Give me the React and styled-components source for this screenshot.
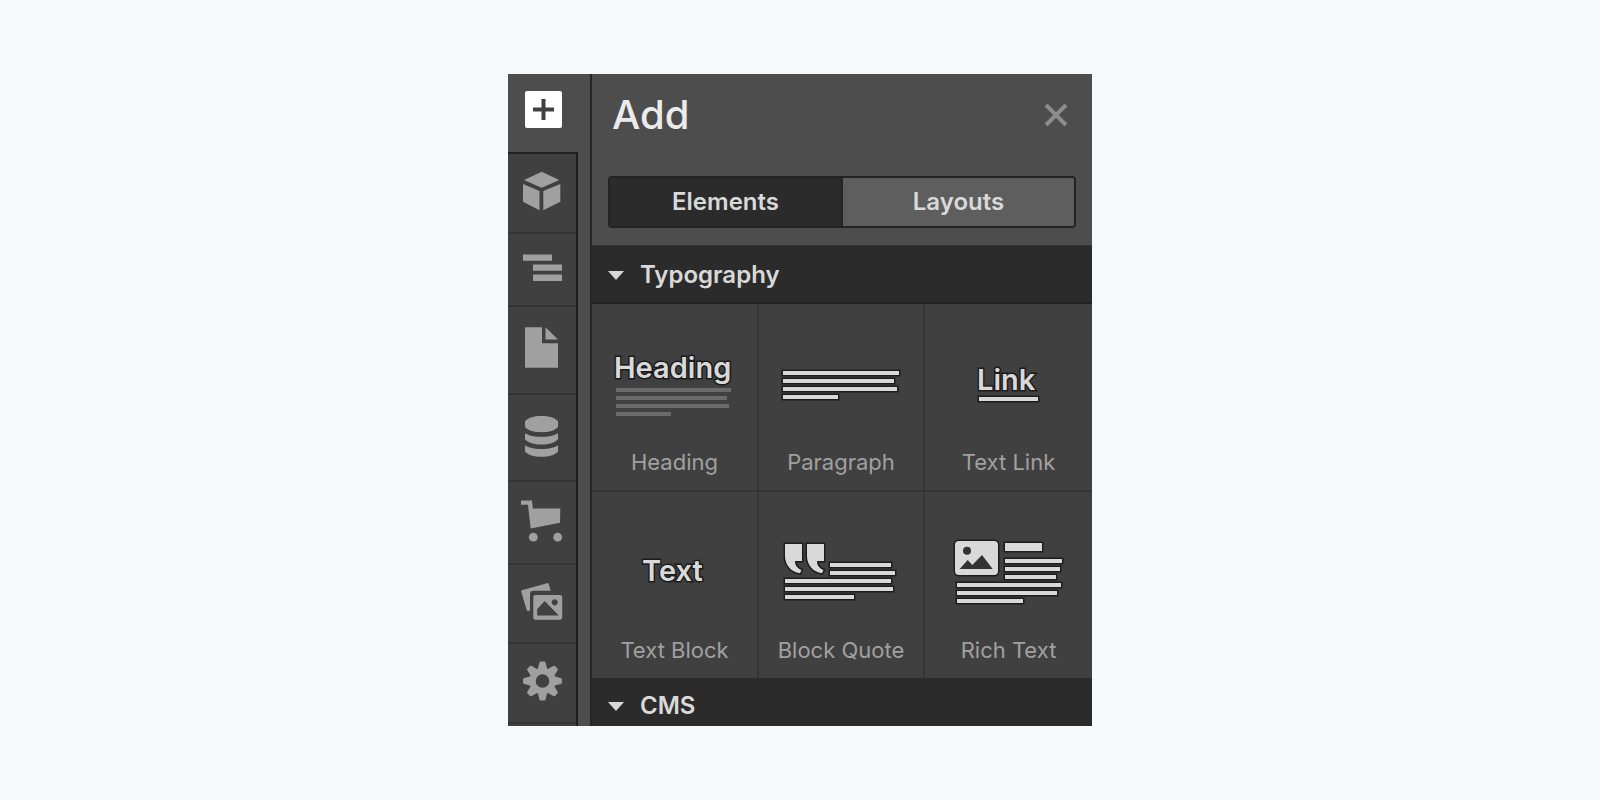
import React, { useState } from 'react';
import styled, { createGlobalStyle } from 'styled-components';

const GlobalStyle = createGlobalStyle`
  * {
    box-sizing: border-box;
  }

  body {
    margin: 0;
    background: #f6f8fa;
    font-family: Inter, 'Liberation Sans', sans-serif;
  }

  button {
    margin: 0;
    padding: 0;
    border: none;
    background: none;
    font: inherit;
    color: inherit;
    cursor: pointer;
  }

  svg {
    display: block;
  }
`;

const Page = styled.main`
  min-height: 100vh;
  padding: 74px 24px;
  display: flex;
  justify-content: center;
  align-items: flex-start;
`;

const Designer = styled.div`
  width: 100%;
  max-width: 584px;
  max-height: calc(100vh - 148px);
  overflow: hidden;
  display: flex;
  background: #4d4d4d;
  color: #d9d9d9;
`;

/* left toolbar */

const Rail = styled.nav`
  flex: 0 0 82px;
  display: flex;
  flex-direction: column;
  align-items: flex-start;
`;

const AddBtn = styled.button`
  margin: 17px 0 24px 17px;
  width: 37px;
  height: 37px;
  border-radius: 2px;
  background: #fff;
  color: #404040;
`;

const RailList = styled.div`
  flex: 1 0 auto;
  width: 70px;
  border-top: 2px solid #222;
  border-right: 2px solid #1e1e1e;
  background: #404040;
`;

const RailBtn = styled.button`
  width: 100%;
  height: ${(props) => props.$height}px;
  padding-bottom: 4px;
  border-bottom: 2px solid #343434;
  display: flex;
  align-items: center;
  justify-content: center;
  color: #a0a0a0;

  &:hover {
    color: #d9d9d9;
  }
`;

/* add panel */

const Panel = styled.section`
  flex: 1;
  min-width: 0;
  border-left: 2px solid #262626;
`;

const PanelHeader = styled.header`
  padding: 16px 20px 0;
  display: flex;
  align-items: center;
  justify-content: space-between;
`;

const Title = styled.h1`
  margin: 0;
  font-size: 40px;
  line-height: 50px;
  font-weight: 500;
  color: #ebebeb;
`;

const CloseBtn = styled.button`
  width: 32px;
  height: 32px;
  display: flex;
  align-items: center;
  justify-content: center;
  color: #8c8c8c;
`;

const Tabs = styled.div`
  margin: 36px 16px 17px;
  display: flex;
  border: 2px solid #242424;
  border-radius: 4px;
  overflow: hidden;
`;

const Tab = styled.button`
  flex: 1;
  height: 48px;
  padding-bottom: 2px;
  font-size: 24px;
  font-weight: 600;
  background: ${(props) => (props.$active ? '#2b2b2b' : '#5e5e5e')};

  & + & {
    border-left: 2px solid #242424;
  }
`;

const SectionBtn = styled.button`
  width: 100%;
  height: ${(props) => (props.$open ? 59 : 56)}px;
  padding: 2px 16px 0;
  border-top: ${(props) => (props.$open ? '1px solid #353535' : 'none')};
  border-bottom: 2px solid #222;
  display: flex;
  align-items: center;
  gap: 16px;
  background: #2b2b2b;
  font-size: 24px;
  line-height: 28px;
  font-weight: 600;
`;

const Grid = styled.div`
  display: grid;
  grid-template-columns: 167px 166px 1fr;
  grid-template-rows: 188px 186px;
  background: #404040;
`;

const Item = styled.button`
  padding: 36px 0 0;
  border-right: 2px solid #353535;
  border-bottom: 2px solid #353535;
  display: flex;
  flex-direction: column;
  align-items: center;

  &:nth-child(3n) {
    border-right: none;
  }

  &:nth-child(n + 4) {
    border-bottom: none;
  }
`;

const Thumb = styled.svg`
  align-self: flex-start;
  margin-left: 20px;
  overflow: visible;
  fill: #d9d9d9;
  stroke: #1c1c1c;
  stroke-width: 3px;
  paint-order: stroke;
  font-size: 29px;
  font-weight: 600;
`;

const ItemLabel = styled.span`
  margin-top: 28px;
  font-size: 22px;
  line-height: 28px;
  color: #a0a0a0;
`;

const Icon = ({ children }) => (
  <svg width="42" height="42" viewBox="0 0 42 42" fill="currentColor" aria-hidden="true">
    {children}
  </svg>
);

const Lines = ({ x, rows }) => rows.map(([y, width]) => (
  <rect key={y} x={x} y={y} width={width} height="4" />
));

const railItems = [
  {
    label: 'Symbols',
    height: 80,
    icon: (
      <>
        <path d="M20.7 1.7 38.3 10 20.7 17.7 3 10z" />
        <path d="M2 14l16.5 7v19.3L2 31.7z" />
        <path d="M39.3 14l-17 7v19.3l17-8.6z" />
      </>
    ),
  },
  {
    label: 'Navigator',
    height: 73,
    icon: <path d="M2 7.4h29v6.4H2zM12 17.4h29v6.4H12zM12 27.6h29V34H12z" />,
  },
  {
    label: 'Pages',
    height: 88,
    icon: (
      <>
        <path d="M4 .3h17v16h16v24.4H4z" />
        <path d="M24.5.3 37 12.6H24.5z" />
      </>
    ),
  },
  {
    label: 'CMS',
    height: 87,
    icon: (
      <>
        <path d="M4 6.2C7 2.700 13 1 20.500 1S34 2.700 37 6.200v5.800c-3 3.500-9 5.200-16.500 5.200S7 15.500 4 12z" />
        <path d="M4 18.200C8 20.700 13 21.800 20.500 21.800S33 20.700 37 18.200v6C34 27.500 28 29.500 20.500 29.500S7 27.500 4 24.200z" />
        <path d="M4 30.200C8 32.700 13 33.900 20.500 33.900S33 32.700 37 30.200v6.200C34 39.700 28 41.700 20.500 41.700S7 39.700 4 36.400z" />
      </>
    ),
  },
  {
    label: 'Ecommerce',
    height: 83,
    icon: (
      <>
        <path d="M0 .4h11l.8 8.200h27.500l-.3 14.200L9.700 28.400 7 4.800H0z" />
        <circle cx="12.300" cy="37.200" r="4.400" />
        <circle cx="36.700" cy="37.200" r="4.400" />
      </>
    ),
  },
  {
    label: 'Assets',
    height: 79,
    icon: (
      <>
        <path d="M1.500 9 26 2.200q1.500-.4 1.900 1l1.700 6.500H12.500Q9 9.700 9 13v16.500l-1.500.5q-1.500.3-1.900-1.200L.3 11q-.4-1.500 1.200-2z" />
        <path
          fillRule="evenodd"
          d="M14.500 14H39q2.200 0 2.200 2.200v20.300q0 2.200-2.200 2.200H14.500q-2.200 0-2.200-2.200V16.200q0-2.200 2.200-2.200zM16.200 28v6.400h21.500L23.700 20zM33.700 18.200a3.100 3.100 0 1 0 .01 0z"
        />
      </>
    ),
  },
  {
    label: 'Settings',
    height: 80,
    icon: (
      <>
        <circle cx="21.500" cy="21" r="10" fill="none" stroke="currentColor" strokeWidth="6.400" />
        {[0, 45, 90, 135, 180, 225, 270, 315].map((angle) => (
          <path
            key={angle}
            d="M16.700 9.500l1.700-6.700q.3-1.200 1.300-1.200h3.600q1 0 1.300 1.200l1.700 6.700z"
            transform={`rotate(${angle} 21.500 21)`}
          />
        ))}
      </>
    ),
  },
];

const typography = [
  {
    label: 'Heading',
    thumb: (
      <>
        <g fill="#6b6b6b" stroke="none">
          <Lines x={4} rows={[[48, 115], [56, 111], [64, 113], [72, 55]]} />
        </g>
        <text x="2" y="38">Heading</text>
      </>
    ),
  },
  {
    label: 'Paragraph',
    thumb: <Lines x={4} rows={[[31, 116], [39, 111], [47, 114], [55, 55]]} />,
  },
  {
    label: 'Text Link',
    thumb: (
      <>
        <text x="32" y="50">Link</text>
        <Lines x={34} rows={[[57, 59]]} />
      </>
    ),
  },
  {
    label: 'Text Block',
    thumb: <text x="30" y="53">Text</text>,
  },
  {
    label: 'Block Quote',
    thumb: (
      <>
        <path d="M6 16h17v17h-7c0 5 3 7.500 6.500 9l-1.500 3.300C12 44 6 37 6 28z" />
        <path d="M28 16h17v17h-7c0 5 3 7.500 6.500 9l-1.500 3.300C34 44 28 37 28 28z" />
        <Lines x={51} rows={[[35, 61], [43, 65]]} />
        <Lines x={6} rows={[[51, 106], [59, 108], [67, 69]]} />
      </>
    ),
  },
  {
    label: 'Rich Text',
    thumb: (
      <>
        <rect x="10" y="13" width="43" height="34" rx="4" />
        <circle cx="22" cy="22.700" r="4" fill="#333" stroke="none" />
        <path d="M14.700 41l8-9 4.600 5L37 27l10.700 14z" fill="#333" stroke="none" />
        <rect x="60" y="15" width="37" height="8" />
        <Lines x={60} rows={[[31, 57], [39, 55], [47, 51]]} />
        <Lines x={12} rows={[[55, 104], [63, 100], [71, 66]]} />
      </>
    ),
  },
];

const Caret = () => (
  <svg width="16" height="9" viewBox="0 0 16 9" fill="currentColor" aria-hidden="true">
    <path d="M0 0h16L8 9z" />
  </svg>
);

const App = () => {
  const [tab, setTab] = useState('Elements');

  return (
    <React.Fragment>
      <GlobalStyle />
      <Page>
        <Designer>
          <Rail aria-label="Tools">
            <AddBtn aria-label="Add">
              <svg width="37" height="37" viewBox="0 0 37 37" fill="currentColor" aria-hidden="true">
                <path d="M16.500 8h4v8.500H29v4h-8.500V29h-4v-8.500H8v-4h8.500z" />
              </svg>
            </AddBtn>
            <RailList>
              {railItems.map(({ label, height, icon }) => (
                <RailBtn key={label} $height={height} aria-label={label}>
                  <Icon>{icon}</Icon>
                </RailBtn>
              ))}
            </RailList>
          </Rail>
          <Panel>
            <PanelHeader>
              <Title>Add</Title>
              <CloseBtn aria-label="Close">
                <svg width="24" height="24" viewBox="0 0 24 24" stroke="currentColor" strokeWidth="4" aria-hidden="true">
                  <path d="M2 2l20 20M22 2L2 22" />
                </svg>
              </CloseBtn>
            </PanelHeader>
            <Tabs role="tablist">
              {['Elements', 'Layouts'].map((name) => (
                <Tab
                  key={name}
                  role="tab"
                  aria-selected={tab === name}
                  $active={tab === name}
                  onClick={() => setTab(name)}
                >
                  {name}
                </Tab>
              ))}
            </Tabs>
            <SectionBtn $open aria-expanded="true">
              <Caret />
              Typography
            </SectionBtn>
            <Grid>
              {typography.map(({ label, thumb }) => (
                <Item key={label}>
                  <Thumb width="124" height="80" aria-hidden="true">
                    {thumb}
                  </Thumb>
                  <ItemLabel>{label}</ItemLabel>
                </Item>
              ))}
            </Grid>
            <SectionBtn>
              <Caret />
              CMS
            </SectionBtn>
          </Panel>
        </Designer>
      </Page>
    </React.Fragment>
  );
};

export default App;
